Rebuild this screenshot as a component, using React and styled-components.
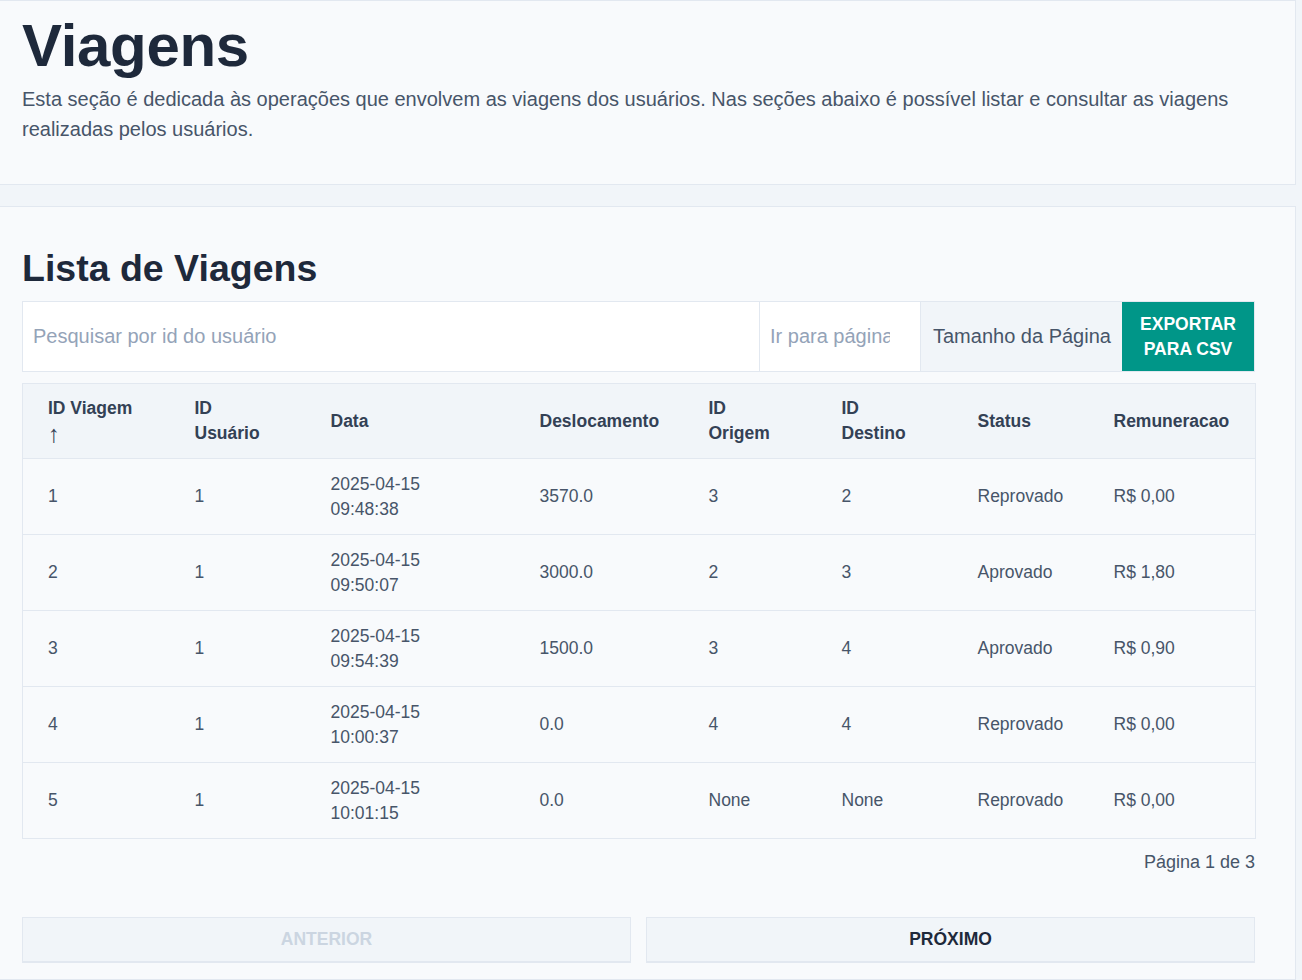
import React from "react";
import styled, { createGlobalStyle } from "styled-components";

// Paleta (slate + teal)
const BG = "#f1f5f9";
const CARD_BG = "#f8fafc";
const BORDER = "#e2e8f0";
const TEXT_DARK = "#1e293b";
const TEXT_HEAD = "#334155";
const TEXT_BODY = "#475569";
const TEXT_MUTED = "#94a3b8";
const TEAL = "#009688";

const GlobalStyle = createGlobalStyle`
  body {
    margin: 0;
    background: ${BG};
    font-family: "Liberation Sans", Arial, sans-serif;
    color: ${TEXT_BODY};
  }
  * { box-sizing: border-box; }
`;

const Main = styled.main`
  display: flex;
  flex-direction: column;
  gap: 21px;
  padding-right: 6px;
`;

const Card = styled.section`
  background: ${CARD_BG};
  border: 1px solid ${BORDER};
  border-left: none;
  padding: ${(p) => p.$pad};
`;

const Title = styled.h1`
  margin: 0;
  font-size: 60px;
  line-height: 72px;
  font-weight: 700;
  color: ${TEXT_DARK};
  letter-spacing: -0.3px;
`;

const Intro = styled.p`
  margin: 2px 0 0;
  font-size: 20px;
  line-height: 30px;
  color: ${TEXT_BODY};
`;

const Subtitle = styled.h2`
  margin: 0 0 11px;
  font-size: 37.5px;
  line-height: 43px;
  font-weight: 700;
  color: ${TEXT_DARK};
`;

/* Barra de filtros */
const Toolbar = styled.div`
  display: flex;
  height: 71px;
  border: 1px solid ${BORDER};
`;

const Field = styled.input`
  width: ${(p) => p.$w};
  flex: ${(p) => (p.$grow ? 1 : "none")};
  height: 100%;
  border: none;
  border-right: 1px solid ${BORDER};
  background: #ffffff;
  padding: 0 ${(p) => p.$padRight || "10px"} 0 10px;
  font: inherit;
  font-size: 20px;
  color: ${TEXT_BODY};
  outline: none;

  &::placeholder {
    color: ${TEXT_MUTED};
  }
`;

const SizeSelect = styled.div`
  width: 201px;
  display: flex;
  align-items: center;
  padding: 0 12px;
  background: ${BG};
  font-size: 20px;
  color: ${TEXT_BODY};
  white-space: nowrap;
`;

const ExportButton = styled.button`
  width: 132px;
  border: none;
  background: ${TEAL};
  color: #ffffff;
  font: inherit;
  font-size: 17.5px;
  font-weight: 700;
  line-height: 25px;
  text-transform: uppercase;
  cursor: pointer;
`;

/* Tabela */
const Table = styled.table`
  width: 100%;
  margin-top: 11px;
  border-collapse: collapse;
  border: 1px solid ${BORDER};
  table-layout: fixed;
`;

const Th = styled.th`
  height: 75px;
  padding: 0 25px;
  background: ${BG};
  text-align: left;
  font-size: 17.5px;
  line-height: 25px;
  font-weight: 700;
  color: ${TEXT_HEAD};
  white-space: pre-line;
  border-bottom: 1px solid ${BORDER};
`;

const SortArrow = styled.span`
  font-family: "Liberation Sans", Arial, sans-serif;
  font-weight: 400;
  font-size: 24px;
  line-height: 25px;
  vertical-align: -3px;
  color: ${TEXT_HEAD};
`;

const Td = styled.td`
  height: 76px;
  padding: 0 25px;
  font-size: 17.5px;
  line-height: 25px;
  color: ${TEXT_BODY};
  border-bottom: 1px solid ${BORDER};
  white-space: pre-line;
`;

const PageInfo = styled.div`
  margin-top: 11px;
  text-align: right;
  font-size: 18px;
  line-height: 25px;
  color: ${TEXT_BODY};
`;

const Pager = styled.div`
  display: grid;
  grid-template-columns: 1fr 1fr;
  gap: 15px;
  margin-top: 42px;
`;

const PageButton = styled.button`
  height: 46px;
  border: 1px solid ${BORDER};
  border-bottom-width: 2px;
  background: ${BG};
  font: inherit;
  font-size: 17.5px;
  font-weight: 700;
  text-transform: uppercase;
  color: ${(p) => (p.disabled ? "#cbd5e1" : TEXT_DARK)};
  cursor: ${(p) => (p.disabled ? "default" : "pointer")};
`;

const columns = [
  { key: "id", label: "ID Viagem", sorted: true, width: 147 },
  { key: "user", label: "ID\nUsuário", width: 136 },
  { key: "date", label: "Data", width: 209 },
  { key: "dist", label: "Deslocamento", width: 169 },
  { key: "orig", label: "ID\nOrigem", width: 133 },
  { key: "dest", label: "ID\nDestino", width: 136 },
  { key: "status", label: "Status", width: 136 },
  { key: "pay", label: "Remuneracao", width: 167 },
];

const viagens = [
  ["1", "1", "2025-04-15\n09:48:38", "3570.0", "3", "2", "Reprovado", "R$ 0,00"],
  ["2", "1", "2025-04-15\n09:50:07", "3000.0", "2", "3", "Aprovado", "R$ 1,80"],
  ["3", "1", "2025-04-15\n09:54:39", "1500.0", "3", "4", "Aprovado", "R$ 0,90"],
  ["4", "1", "2025-04-15\n10:00:37", "0.0", "4", "4", "Reprovado", "R$ 0,00"],
  ["5", "1", "2025-04-15\n10:01:15", "0.0", "None", "None", "Reprovado", "R$ 0,00"],
];

export default function App() {
  return (
    <>
      <GlobalStyle />
      <Main>
        <Card $pad="9px 22px 40px">
          <Title>Viagens</Title>
          <Intro>
            Esta seção é dedicada às operações que envolvem as viagens dos
            usuários. Nas seções abaixo é possível listar e consultar as viagens
            realizadas pelos usuários.
          </Intro>
        </Card>

        <Card $pad="40px 40px 16px 22px">
          <Subtitle>Lista de Viagens</Subtitle>
          <Toolbar>
            <Field $grow placeholder="Pesquisar por id do usuário" />
            <Field $w="161px" $padRight="30px" placeholder="Ir para página" />
            <SizeSelect>Tamanho da Página</SizeSelect>
            <ExportButton>Exportar para CSV</ExportButton>
          </Toolbar>

          <Table>
            <colgroup>
              {columns.map((c) => (
                <col key={c.key} style={{ width: c.width }} />
              ))}
            </colgroup>
            <thead>
              <tr>
                {columns.map((c) => (
                  <Th key={c.key}>
                    {c.label}
                    {c.sorted && (
                      <>
                        {"\n"}
                        <SortArrow>↑</SortArrow>
                      </>
                    )}
                  </Th>
                ))}
              </tr>
            </thead>
            <tbody>
              {viagens.map((row) => (
                <tr key={row[0]}>
                  {row.map((cell, i) => (
                    <Td key={i}>{cell}</Td>
                  ))}
                </tr>
              ))}
            </tbody>
          </Table>

          <PageInfo>Página 1 de 3</PageInfo>

          <Pager>
            <PageButton disabled>Anterior</PageButton>
            <PageButton>Próximo</PageButton>
          </Pager>
        </Card>
      </Main>
    </>
  );
}
